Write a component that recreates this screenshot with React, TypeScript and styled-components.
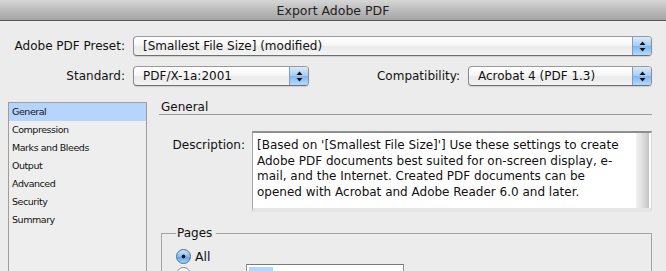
import styled, { createGlobalStyle } from 'styled-components';

const GlobalStyle = createGlobalStyle`
  html, body {
    margin: 0;
    padding: 0;
    background: #ececec;
  }
  body {
    font-family: "DejaVu Sans", "Liberation Sans", sans-serif;
    color: #111;
  }
`;

const sections = ['General', 'Compression', 'Marks and Bleeds', 'Output', 'Advanced', 'Security', 'Summary'];

const description =
  "[Based on '[Smallest File Size]'] Use these settings to create Adobe PDF documents best suited for on-screen display, e-mail, and the Internet.  Created PDF documents can be opened with Acrobat and Adobe Reader 6.0 and later.";

function Stepper() {
  return (
    <StepperBox>
      <svg width="7" height="11" viewBox="0 0 7 11">
        <path d="M3.5 0.5 L6.5 4 L0.5 4 Z" fill="#111" />
        <path d="M0.5 7 L6.5 7 L3.5 10.5 Z" fill="#111" />
      </svg>
    </StepperBox>
  );
}

interface PopupProps {
  value: string;
  width?: number;
}

function Popup(props: PopupProps) {
  return (
    <PopupBox $width={props.width}>
      <PopupText>{props.value}</PopupText>
      <Stepper />
    </PopupBox>
  );
}

export default function App() {
  return (
    <Window>
      <GlobalStyle />
      <TitleBar>Export Adobe PDF</TitleBar>

      <Body>
        <PresetRow>
          <Label>Adobe PDF Preset:</Label>
          <Popup value="[Smallest File Size] (modified)" />
        </PresetRow>

        <StandardRow>
          <Label>Standard:</Label>
          <Popup value="PDF/X-1a:2001" width={174} />
          <Spacer />
          <Label>Compatibility:</Label>
          <Popup value="Acrobat 4 (PDF 1.3)" width={182} />
        </StandardRow>

        <Main>
          <SectionList>
            {sections.map((name, index) => (
              <SectionItem key={name} $selected={index === 0}>{name}</SectionItem>
            ))}
          </SectionList>

          <Panel>
            <PanelTitle>General</PanelTitle>

            <DescriptionRow>
              <DescriptionLabel>Description:</DescriptionLabel>
              <DescriptionBox>
                <DescriptionText>{description}</DescriptionText>
                <ScrollTrack />
              </DescriptionBox>
            </DescriptionRow>

            <PagesGroup>
              <Legend>Pages</Legend>
              <RadioRow>
                <Radio $checked />
                <span>All</span>
              </RadioRow>
              <RangeRow>
                <Radio />
                <RangeInput>
                  <Selection />
                </RangeInput>
              </RangeRow>
            </PagesGroup>
          </Panel>
        </Main>
      </Body>
    </Window>
  );
}

const Window = styled.div`
  width: 666px;
  height: 271px;
  overflow: hidden;
  background: #ececec;
`;

const TitleBar = styled.div`
  height: 20px;
  border-bottom: 1px solid #565656;
  background: linear-gradient(#d6d6d6, #bcbcbc 50%, #a4a4a4);
  display: flex;
  align-items: center;
  justify-content: center;
  font-size: 12.5px;
  color: #222;
`;

const Body = styled.div`
  padding: 15px 14px 0 8px;
  font-size: 12px;
`;

const PresetRow = styled.div`
  display: grid;
  grid-template-columns: 117px 1fr;
  column-gap: 8px;
  align-items: center;
`;

const StandardRow = styled.div`
  display: flex;
  align-items: center;
  gap: 8px;
  margin-top: 10px;

  & > :first-child {
    width: 117px;
  }
`;

const Spacer = styled.div`
  flex: 1;
`;

const Label = styled.div`
  text-align: right;
  white-space: nowrap;
`;

const PopupBox = styled.div<{ $width?: number }>`
  display: flex;
  height: 18px;
  width: ${p => (p.$width ? `${p.$width}px` : 'auto')};
  border: 1px solid #8c8c8c;
  border-top-color: #9a9a9a;
  border-bottom-color: #6f6f6f;
  border-radius: 4px;
  background: linear-gradient(#ffffff, #f7f7f7 45%, #eaeaea 55%, #f4f4f4);
  box-shadow: 0 1px 1px rgba(0, 0, 0, 0.12);
  overflow: hidden;
`;

const PopupText = styled.div`
  flex: 1;
  display: flex;
  align-items: center;
  padding-left: 9px;
  white-space: nowrap;
`;

const StepperBox = styled.div`
  width: 18px;
  display: flex;
  align-items: center;
  justify-content: center;
  border-left: 1px solid #7f9cc2;
  background: linear-gradient(#dbeafb, #a7cdf5 48%, #80b8f0 52%, #b4dafc);
`;

const Main = styled.div`
  display: flex;
  gap: 12px;
  margin-top: 17px;
`;

const SectionList = styled.div`
  width: 137px;
  height: 180px;
  flex-shrink: 0;
  margin-top: -1px;
  border: 1px solid #9e9e9e;
  background: #eeeeee;
  font-size: 9.5px;
  letter-spacing: -0.45px;
`;

const SectionItem = styled.div<{ $selected?: boolean }>`
  height: 18px;
  display: flex;
  align-items: center;
  padding: 0 0 2px 3px;
  box-sizing: border-box;
  background: ${p => (p.$selected ? '#b5d5ff' : 'transparent')};
`;

const Panel = styled.div`
  flex: 1;
  display: flex;
  flex-direction: column;
`;

const PanelTitle = styled.div`
  padding: 0 0 3px 2px;
  border-bottom: 1px solid #9a9a9a;
  line-height: 8px;
  height: 8px;
`;

const DescriptionRow = styled.div`
  display: flex;
  gap: 7px;
  margin-top: 16px;
`;

const DescriptionLabel = styled.div`
  width: 86px;
  text-align: right;
  padding-top: 7px;
`;

const DescriptionBox = styled.div`
  flex: 1;
  height: 75px;
  display: flex;
  background: #fff;
  border-top: 2px solid #8f8f8f;
  border-left: 1px solid #a8a8a8;
  border-right: 1px solid #d8d8d8;
  border-bottom: 4px solid #e6e6e6;
`;

const DescriptionText = styled.div`
  flex: 1;
  padding: 5px 6px 0 4px;
  line-height: 15.5px;
`;

const ScrollTrack = styled.div`
  width: 13px;
  margin-right: 2px;
  background: linear-gradient(90deg, #f2f2f2, #d9d9d9 60%, #c4c4c4);
`;

const PagesGroup = styled.fieldset`
  margin: 14px 0 0 2px;
  padding: 8px 14px 0 14px;
  border: 1px solid #a3a3a3;
  min-width: 0;
`;

const Legend = styled.legend`
  padding: 0 4px 0 1px;
  font-size: 12px;
`;

const RadioRow = styled.div`
  display: flex;
  align-items: center;
  gap: 4px;
  font-size: 12.5px;
  height: 16px;
`;

const Radio = styled.div<{ $checked?: boolean }>`
  width: 13px;
  height: 13px;
  border-radius: 50%;
  border: 1px solid ${p => (p.$checked ? '#4a6c98' : '#8a8a8a')};
  background: ${p =>
    p.$checked
      ? 'radial-gradient(circle, #111 0 1.6px, transparent 2.2px), linear-gradient(#cfe4fb, #86bcef 50%, #5fa3e8 55%, #a6d2fb)'
      : 'linear-gradient(#ffffff, #e6e6e6)'};
`;

const RangeRow = styled.div`
  display: flex;
  align-items: flex-start;
  gap: 55px;
  margin-top: 0;

  & > :first-child {
    margin-top: 3px;
  }
`;

const RangeInput = styled.div`
  width: 152px;
  height: 18px;
  border: 1px solid #8f8f8f;
  border-top-color: #7a7a7a;
  background: #fff;
  padding: 2px;
`;

const Selection = styled.div`
  width: 24px;
  height: 14px;
  background: #b5d5ff;
`;
